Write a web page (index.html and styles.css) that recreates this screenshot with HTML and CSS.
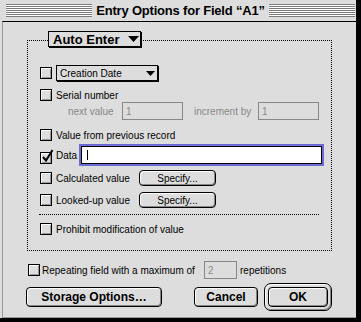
FILE: index.html
```html
<!DOCTYPE html>
<html lang="en">
<head>
    <meta charset="UTF-8">
    <title>Entry Options for Field “A1”</title>
    <link rel="stylesheet" href="styles.css">
</head>
<body>
    <div class="window">
        <!-- Title bar -->
        <div class="titlebar">
            <div class="stripes"></div>
            <div class="title">Entry Options for Field “A1”</div>
            <div class="stripes"></div>
        </div>

        <div class="panel">
            <!-- Auto Enter group -->
            <div class="group">
                <div class="popup popup-big">Auto Enter<svg class="arrow" width="11" height="6"><polygon points="0,0 11,0 5.5,6"/></svg></div>

                <div class="row row-a">
                    <span class="check"></span>
                    <div class="popup popup-small">Creation Date<svg class="arrow" width="9" height="5"><polygon points="0,0 9,0 4.5,5"/></svg></div>
                </div>
                <div class="row row-b">
                    <span class="check"></span>
                    <span>Serial number</span>
                </div>
                <div class="row row-c">
                    <span class="dim label-next">next value</span>
                    <div class="field">1</div>
                    <span class="dim label-incr">increment by</span>
                    <div class="field">1</div>
                </div>
                <div class="row row-d">
                    <span class="check"></span>
                    <span>Value from previous record</span>
                </div>
                <div class="row row-e">
                    <span class="check checked"><svg width="13" height="14"><polyline points="2,8 5,11.5 11.5,1" fill="none" stroke="#000" stroke-width="2"/></svg></span>
                    <span class="label-data">Data</span>
                    <div class="field field-active"><span class="caret"></span></div>
                </div>
                <div class="row row-f">
                    <span class="check"></span>
                    <span class="label-calc">Calculated value</span>
                    <div class="button button-small">Specify...</div>
                </div>
                <div class="row row-g">
                    <span class="check"></span>
                    <span class="label-calc">Looked-up value</span>
                    <div class="button button-small">Specify...</div>
                </div>
                <div class="separator"></div>
                <div class="row row-h">
                    <span class="check"></span>
                    <span>Prohibit modification of value</span>
                </div>
            </div>

            <!-- Repetitions -->
            <div class="repeat">
                <span class="check"></span>
                <span class="label-repeat">Repeating field with a maximum of</span>
                <div class="field field-rep">2</div>
                <span class="label-reps">repetitions</span>
            </div>

            <!-- Buttons -->
            <div class="buttons">
                <div class="button button-big btn-storage">Storage Options…</div>
                <div class="button button-big btn-cancel">Cancel</div>
                <div class="default-ring">
                    <div class="button button-big btn-ok">OK</div>
                </div>
            </div>
        </div>
    </div>
</body>
</html>
```

FILE: styles.css
```css
body { margin: 0; background: #ddd; font-family: "Liberation Sans", Arial, sans-serif; font-size: 10px; color: #000; }
.window { width: 361px; height: 322px; box-sizing: border-box; background: #ddd; border-right: 5px solid #000; border-bottom: 4px solid #000; display: flex; flex-direction: column; }

/* title bar */
.titlebar { height: 21px; flex: none; display: flex; align-items: center; padding: 0 1px 0 6px; }
.stripes { flex: 1; height: 13px; background: repeating-linear-gradient(#7b7b7b 0 1px, #fff 1px 2px); }
.title { padding: 0 4px; font-weight: bold; font-size: 13px; letter-spacing: -0.2px; white-space: nowrap; }

.panel { flex: 1; margin-left: 2px; border-top: 1px solid #000; border-left: 1px solid #999; border-bottom: 1px solid #999; }

/* group box */
.group { position: relative; width: 305px; box-sizing: border-box; margin: 18px 0 0 24px; padding: 0 0 12px 12px; border: 1px dotted #000; }
.row { display: flex; align-items: center; white-space: nowrap; }
.row-a { height: 18px; margin-top: 23px; }
.row-b { height: 14px; margin-top: 6px; }
.row-c { height: 18px; padding-left: 28px; }
.row-d { height: 18px; margin-top: 6px; }
.row-e { height: 22px; }
.row-f { height: 16px; margin-top: 4px; }
.row-g { height: 16px; margin-top: 6px; }
.row-h { height: 18px; margin-top: 5px; }
.separator { width: 280px; margin: 6px 0 0 -1px; border-top: 1px dotted #000; }

/* popups */
.popup { display: flex; align-items: center; box-sizing: border-box; border: 1px solid #000; box-shadow: 1px 1px 0 #000; background: #ddd; }
.popup .arrow { margin-left: auto; }
.popup-big { position: absolute; left: 20px; top: -10px; width: 93px; height: 16px; padding: 0 1px 0 4px; font-size: 13px; font-weight: bold; }
.popup-small { width: 102px; height: 16px; padding: 0 2px 0 3px; }

/* checkboxes */
.check { position: relative; flex: none; width: 12px; height: 12px; box-sizing: border-box; margin-right: 4px; border: 1px solid #000; background: #ddd; box-shadow: inset 1px 1px 0 #fff, inset -1px -1px 0 #999; }
.check svg { position: absolute; left: 0; top: -4px; }
.row-e .check { align-self: flex-end; margin-bottom: 2px; }

/* text fields */
.field { display: flex; align-items: center; box-sizing: border-box; width: 61px; height: 18px; padding-left: 3px; border: 1px solid #888; background: #ddd; color: #888; }
.field-active { width: 241px; border-color: #000; background: #fff; box-shadow: 0 0 0 2px #6b6bd6; padding-left: 5px; }
.field-rep { width: 33px; }
.caret { width: 1px; height: 10px; background: #000; }
.dim { color: #888; }
.label-next { width: 54px; }
.label-incr { width: 64px; margin-left: 11px; }
.label-data { width: 25px; }
.label-calc { width: 83px; }

/* buttons */
.button { display: flex; align-items: center; justify-content: center; box-sizing: border-box; border: 1px solid #000; border-radius: 4px; background: #ddd; box-shadow: inset 1px 1px 0 #fff, inset -1px -1px 0 #888; white-space: nowrap; }
.button-small { width: 77px; height: 16px; }
.button-big { height: 20px; font-size: 12px; font-weight: bold; }
.btn-storage { width: 136px; }
.btn-cancel { width: 64px; margin-left: 32px; }
.btn-ok { width: 60px; }
.default-ring { margin-left: 6px; padding: 3px; border: 1px solid #000; border-radius: 7px; background: #ddd; box-shadow: inset 1px 1px 0 #fff, inset -1px -1px 0 #888; }

/* bottom rows */
.repeat { display: flex; align-items: center; height: 18px; margin: 10px 0 0 25px; white-space: nowrap; }
.repeat .check { margin-right: 2px; }
.label-repeat { width: 162px; }
.label-reps { margin-left: 3px; }
.buttons { display: flex; align-items: center; height: 28px; margin: 4px 0 0 23px; }
```
